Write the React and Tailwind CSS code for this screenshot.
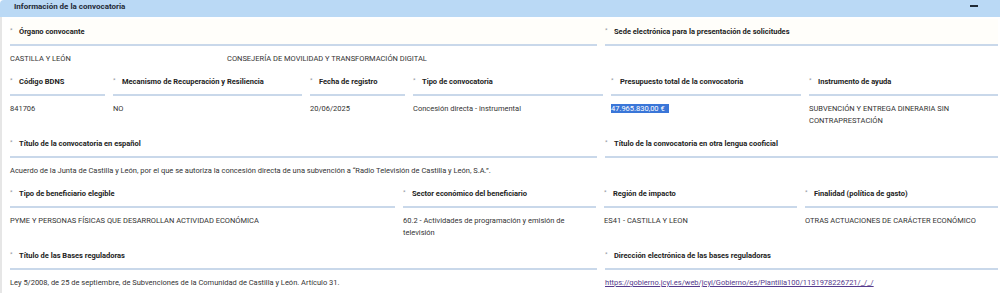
const rows = [
  {
    cols: 'grid-cols-[587px_393px]',
    tint: true,
    fields: [
      {
        label: 'Órgano convocante',
        value: (
          <div className="flex">
            <span className="w-[217px]">CASTILLA Y LEÓN</span>
            <span>CONSEJERÍA DE MOVILIDAD Y TRANSFORMACIÓN DIGITAL</span>
          </div>
        ),
      },
      { label: 'Sede electrónica para la presentación de solicitudes', value: null },
    ],
  },
  {
    cols: 'grid-cols-[95px_189px_95px_190px_190px_189px]',
    fields: [
      { label: 'Código BDNS', value: '841706' },
      { label: 'Mecanismo de Recuperación y Resiliencia', value: 'NO' },
      { label: 'Fecha de registro', value: '20/06/2025' },
      { label: 'Tipo de convocatoria', value: 'Concesión directa - instrumental' },
      {
        label: 'Presupuesto total de la convocatoria',
        value: <span className="bg-[#3a76d8] text-white pr-[4px]">47.965.830,00 €</span>,
      },
      { label: 'Instrumento de ayuda', value: 'SUBVENCIÓN Y ENTREGA DINERARIA SIN CONTRAPRESTACIÓN' },
    ],
  },
  {
    cols: 'grid-cols-[587px_393px]',
    fields: [
      {
        label: 'Título de la convocatoria en español',
        value: 'Acuerdo de la Junta de Castilla y León, por el que se autoriza la concesión directa de una subvención a “Radio Televisión de Castilla y León, S.A.”.',
      },
      { label: 'Título de la convocatoria en otra lengua cooficial', value: null },
    ],
  },
  {
    cols: 'grid-cols-[385px_193px_193px_193px]',
    fields: [
      { label: 'Tipo de beneficiario elegible', value: 'PYME Y PERSONAS FÍSICAS QUE DESARROLLAN ACTIVIDAD ECONÓMICA' },
      { label: 'Sector económico del beneficiario', value: '60.2 - Actividades de programación y emisión de televisión' },
      { label: 'Región de impacto', value: 'ES41 - CASTILLA Y LEON' },
      { label: 'Finalidad (política de gasto)', value: 'OTRAS ACTUACIONES DE CARÁCTER ECONÓMICO' },
    ],
  },
  {
    cols: 'grid-cols-[587px_393px]',
    fields: [
      {
        label: 'Título de las Bases reguladoras',
        value: 'Ley 5/2008, de 25 de septiembre, de Subvenciones de la Comunidad de Castilla y León. Artículo 31.',
      },
      {
        label: 'Dirección electrónica de las bases reguladoras',
        value: (
          <a href="#" className="text-[#55398c] underline">
            https://gobierno.jcyl.es/web/jcyl/Gobierno/es/Plantilla100/1131978226721/_/_/
          </a>
        ),
      },
    ],
  },
];

function Row({ row }) {
  return (
    <div className="pb-[4px]">
      <div className={`grid ${row.cols} gap-x-[8px] ${row.tint ? 'bg-[#fffefa]' : ''}`}>
        {row.fields.map((f, i) => (
          <div
            key={i}
            className="pt-[7px] pb-[6px] border-b-2 border-[#c9d8ea] leading-[12px] font-bold text-[7.5px] text-[#222] flex"
          >
            <span className="w-[9px] text-[6px] leading-[8px] text-[#8a8f99] font-normal">*</span>
            <span>{f.label}</span>
          </div>
        ))}
      </div>
      <div className={`grid ${row.cols} gap-x-[8px]`}>
        {row.fields.map((f, i) => (
          <div key={i} className="pt-[7px] leading-[12px] text-[7.5px] text-[#333] min-h-[19px]">
            {f.value}
          </div>
        ))}
      </div>
    </div>
  );
}

export default function App() {
  return (
    <div className="w-[1000px] h-[295px] bg-white overflow-hidden font-['Roboto',sans-serif]">
      <div className="h-[17px] bg-[#bad9f5] rounded-tl-[4px] flex items-start justify-between pl-[14px] pr-[22px]">
        <span className="text-[8px] font-bold text-[#1f2a36] leading-[13px]">Información de la convocatoria</span>
        <span className="mt-[5px] w-[8px] h-[1.5px] bg-[#1f2a36]"></span>
      </div>
      <div className="border-l-2 border-[#e6e6e6] pl-[8px] pr-[2px] pt-[2px]">
        {rows.map((r, i) => (
          <Row key={i} row={r} />
        ))}
      </div>
    </div>
  );
}
